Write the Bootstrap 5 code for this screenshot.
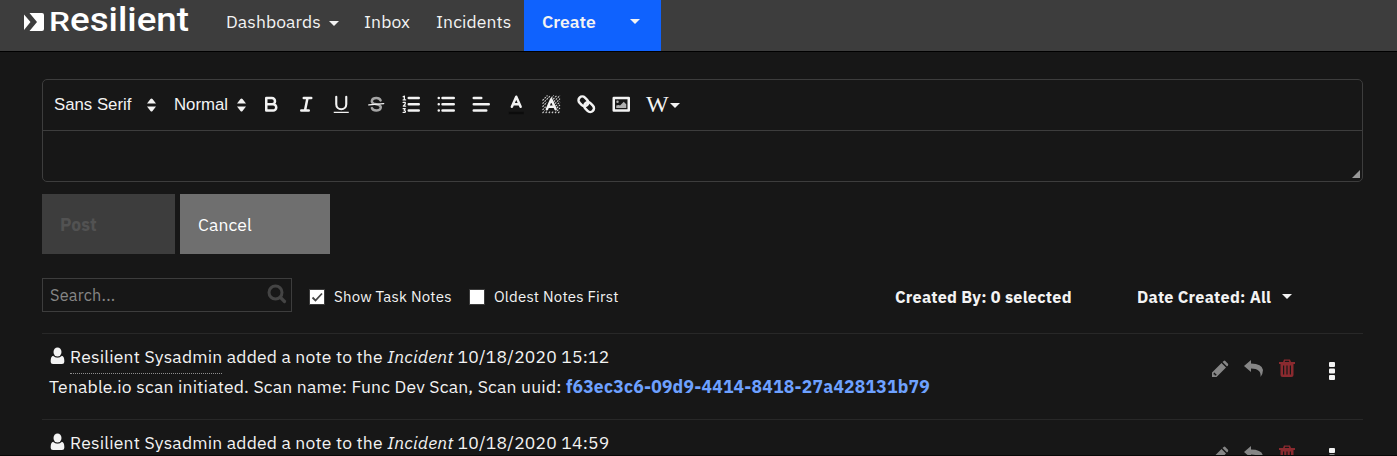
<!DOCTYPE html>
<html lang="en">
<head>
<meta charset="utf-8">
<title>Resilient</title>
<meta name="viewport" content="width=device-width, initial-scale=1">
<link rel="stylesheet" href="https://cdn.jsdelivr.net/npm/bootstrap@5.3.0/dist/css/bootstrap.min.css">
<style>
body{background:#171717;color:#f3f3f3;font-family:"IBM Plex Sans",Roboto,"Noto Sans",sans-serif;font-size:17.5px;line-height:30px}
.page{height:456px;border-bottom:1px solid #080808}
.topbar{height:52px;background:#3d3d3d;border-bottom:1px solid #000}
.topbar a,.topbar button{line-height:43px;height:51px;color:#f3f3f3;text-decoration:none;white-space:nowrap}
.topbar a span,.actions span{letter-spacing:.1px}
.brand{width:226px;padding-left:24px}
.brand svg{display:block}
.caret{display:inline-block;border:5px solid transparent;border-top-color:currentColor;border-bottom:0}
.create{background:#0f62fe;width:137px;padding:0 21px 0 18px;font-weight:600}
.work{padding:27px 34px 0 42px}
.editor{height:103px;border:1px solid #3d3d3d;border-radius:5px}
.tools{height:51px;border-bottom:1px solid #3d3d3d;padding-left:11px}
.pick{font:400 16.8px/30px "Liberation Sans",sans-serif}
.tool{width:35px;height:30px;display:flex;align-items:center;justify-content:center;padding-bottom:1px}
.tool svg{width:22.5px;height:22.5px}
.s{fill:none;stroke:#f3f3f3;stroke-linecap:round;stroke-linejoin:round;stroke-width:2}
.f{fill:#f3f3f3}.th{stroke-width:1}
.wiki{font:24px/26px "Liberation Serif",serif;margin-top:-2px}
.grip{width:8px;height:8px;background:#999;clip-path:polygon(100% 0,100% 100%,0 100%);margin:0 2px 3px 0}
.actions{gap:5px;margin-top:12px}
.actions button{height:60px;border:0;text-align:left;padding:2px 18px 0}
.post{width:133px;background:#3d3d3d;color:#525252;font-weight:700}
.cancel{width:150px;background:#6f6f6f;color:#fff}
.filters{margin-top:24px;height:34px;font-size:15px;letter-spacing:.2px}
.searchbox{width:250px;height:34px;border:1px solid #3d3d3d;padding:0 4px 0 7px;color:#868686;font-size:16.25px}
.box{width:16px;height:16px;background:#fff;border:1px solid #3d3d3d}
.filters b{font-weight:700;font-size:16.25px;letter-spacing:.24px}
.notes{margin-top:21px}
.note{height:86px;border-top:1px solid #282828;padding:8px 22px 0 7px;letter-spacing:.2px}
.who{border-bottom:1px dotted #8d8d8d;display:inline-block;height:32px}
.note .line{height:30px;white-space:nowrap}
.user{width:15px;height:18px;margin:-4px 5px 0 1px;vertical-align:middle}
.uuid{color:#6ea1ff;font-weight:700;letter-spacing:.22px}
</style>
</head>
<body>
<svg class="d-none">
  <symbol id="user" viewBox="0 0 15 18"><ellipse class="f" cx="7.500" cy="5" rx="4" ry="4.500"/><path class="f" d="M3.300 8.700Q7.500 12 11.700 8.700Q14.300 9.500 14.300 13.500V15Q14.300 17 12 17H3Q.7 17 .7 15V13.500Q.7 9.500 3.300 8.700z"/><path d="M3.200 8.600Q7.500 12.300 11.800 8.600" fill="none" stroke="#171717" stroke-width=".6"/></symbol>
  <symbol id="note-tools" viewBox="0 0 130 24"><g fill="#868686"><path fill-rule="evenodd" d="M1 18V13.500L10.500 4L15 8.500L5.500 18zM2.700 14L2.500 15.500H3.700V16.600L5 16.400L5.700 15.700L3.400 13.400z"/><path d="M11.500 3L12.700 1.900Q13.500 1.300 14.300 1.900L17 4.700Q17.500 5.500 17 6.200L16 7.500z"/><path d="M33 7L40 1V4.500Q51 4.500 52 11Q52 14.500 49.500 18Q50.500 9.500 40 9.500V13z"/></g><path fill="#8a2a2f" fill-rule="evenodd" d="M68 3H72L73 0.500H79L80 3H84V5H82.500V16Q82.500 18 80.500 18H71.500Q69.500 18 69.500 16V5H68zM73.700 3H78.300L77.800 1.800H74.200zM72 6.500V15.500H73.200V6.500zM75.400 6.500V15.500H76.600V6.500zM78.800 6.500V15.500H80V6.500z"/><g class="f"><rect x="118" y="3" width="6" height="5" rx="1"/><rect x="118" y="9.500" width="6" height="5" rx="1"/><rect x="118" y="16" width="6" height="5" rx="1"/></g></symbol>
</svg>
<div class="page overflow-hidden">
<nav class="topbar d-flex">
  <a class="brand" href="#"><svg width="170" height="40" viewBox="0 0 170 40">
    <path fill="#fff" d="M0 14.500L6.500 22L0 30zM5.500 13H18Q20 13 20 15V29Q20 31 18 31H5.500L13 22z"/>
    <text y="31" fill="#fff" font-family="Roboto,sans-serif" font-weight="500"><tspan x="25" font-size="25" textLength="21" lengthAdjust="spacingAndGlyphs">R</tspan><tspan x="46" font-size="34" textLength="119" lengthAdjust="spacingAndGlyphs">esilient</tspan></text></svg></a>
  <a href="#" style="width:138px"><span>Dashboards</span><i class="caret ms-2 align-middle"></i></a>
  <a href="#" style="width:72px"><span>Inbox</span></a>
  <a href="#" style="width:88px"><span>Incidents</span></a>
  <button class="create border-0 d-flex justify-content-between"><span>Create</span><i class="caret" style="margin-top:19px"></i></button>
</nav>
<main class="work">
  <section class="editor d-flex flex-column justify-content-between">
    <div class="tools d-flex align-items-center">
      <div class="pick d-flex align-items-center justify-content-between" style="width:102px"><span>Sans Serif</span><svg width="9" height="14"><path class="f" d="M0 5.500L3.500 1Q4.500 0 5.500 1L9 5.500zM0 8.500H9L5.500 13Q4.500 14 3.500 13z"/></svg></div>
      <div class="pick d-flex align-items-center justify-content-between" style="width:72px;margin:0 8px 0 18px"><span>Normal</span><svg width="9" height="14"><path class="f" d="M0 5.500L3.500 1Q4.500 0 5.500 1L9 5.500zM0 8.500H9L5.500 13Q4.500 14 3.500 13z"/></svg></div>
      <span class="tool"><svg viewBox="0 0 18 18"><path class="s" d="M5 4H9.500A2.500 2.500 0 0 1 12 6.500A2.500 2.500 0 0 1 9.500 9H5zM5 9H10.500A2.500 2.500 0 0 1 13 11.500A2.500 2.500 0 0 1 10.500 14H5z"/></svg></span>
      <span class="tool"><svg viewBox="0 0 18 18"><path class="s" d="M7 4H13M5 14H11M8 14L10 4"/></svg></span>
      <span class="tool"><svg viewBox="0 0 18 18"><path class="s" style="stroke-width:1.700" d="M5 3V9A4 4 0 0 0 9 13A4 4 0 0 0 13 9V3"/><rect class="f" x="3" y="15" width="12" height="1"/></svg></span>
      <span class="tool"><svg viewBox="0 0 18 18"><path class="s" style="stroke:#a5a5a5;stroke-width:1.900" d="M12.500 6A3.700 2.700 0 0 0 9 4C5 4 4.500 7.500 7 8.500L11 9.500C14 11 12.500 14 9 14A3.700 2.700 0 0 1 5.500 12"/><path class="s th" d="M3 9.500L15 8.500"/></svg></span>
      <span class="tool"><svg viewBox="0 0 18 18"><path class="s" d="M7 4H15M7 9H15M7 14H15"/><path class="s th" d="M2.500 3L3.500 2.500V5.500M2.500 5.500H4.500M2.500 7.500H4.200V8.700L2.600 10.500H4.500M2.500 12.500H4.200L3.300 13.800Q5 14.500 4 15.500H2.500"/></svg></span>
      <span class="tool"><svg viewBox="0 0 18 18"><path class="s" d="M6 4H15M6 9H15M6 14H15M3 4H3.010M3 9H3.010M3 14H3.010"/></svg></span>
      <span class="tool"><svg viewBox="0 0 18 18"><path class="s" d="M3 4H9M3 9H15M3 14H13"/></svg></span>
      <span class="tool"><svg viewBox="0 0 18 18"><rect x="3" y="15" width="12" height="2" fill="#0c0c0c"/><path class="s" d="M5.500 11L9 3L12.500 11M6.500 9H11.500"/></svg></span>
      <span class="tool"><svg viewBox="0 0 18 18"><path class="s" style="stroke-width:.85;stroke:#d0d0d0;stroke-linecap:butt" stroke-dasharray="1.500 .8" d="M2 6L6 2M2 8.500L8.500 2M2 11L5.500 7.500M2 13.500L4.500 11M2 16L4 14M4.500 16L6 14.500M7 16L8.500 14.500M9.500 16L11 14.500M12 16L16 12M14.500 16L16 14.500M13.500 12L16 9.500M12.500 10.500L16 7M12 8.500L16 4.500M11 7L16 2M10.500 5L13.500 2M9 4L11 2"/><path class="s" d="M5.500 13L9 5L12.500 13M6.500 11H11.500"/></svg></span>
      <span class="tool"><svg viewBox="0 0 18 18"><g transform="rotate(45 9 9)"><rect class="s" x="1.500" y="6" width="8.500" height="6" rx="3"/><rect class="s" x="8" y="6" width="8.500" height="6" rx="3"/></g></svg></span>
      <span class="tool"><svg viewBox="0 0 18 18"><rect class="s" x="3" y="4" width="12" height="10"/><circle cx="6" cy="7" r="1" fill="#b0b0b0"/><path fill="#b0b0b0" d="M5 12V10L7 9.500L8 10L11 7L13 9V12z"/></svg></span>
      <span class="d-flex align-items-center" style="margin-left:7px"><span class="wiki">W</span><i class="caret" style="margin-left:1px"></i></span>
    </div>
    <div class="grip align-self-end"></div>
  </section>
  <div class="actions d-flex"><button class="post"><span>Post</span></button><button class="cancel"><span>Cancel</span></button></div>
  <div class="filters d-flex align-items-center">
    <div class="searchbox d-flex align-items-center justify-content-between"><span>Search...</span><svg width="20" height="20" style="margin-top:-2px"><circle cx="8.500" cy="8.500" r="6.500" fill="none" stroke="#444" stroke-width="3"/><path d="M13.500 13.500L17.500 17.500" stroke="#444" stroke-width="3.200" stroke-linecap="round"/></svg></div>
    <span class="box d-flex" style="margin:4px 9px 0 17px"><svg width="14" height="14"><path d="M2.500 7.500L5.500 10.500L12 3.500" fill="none" stroke="#444" stroke-width="1.800"/></svg></span>
    <span class="text-nowrap" style="width:118px;margin-top:4px">Show Task Notes</span>
    <span class="box" style="margin:4px 9px 0 17px"></span>
    <span style="width:401px;margin-top:4px">Oldest Notes First</span>
    <b style="width:242px;margin-top:4px">Created By: 0 selected</b>
    <b style="width:145px;margin-top:4px">Date Created: All</b><i class="caret" style="margin-top:3px"></i>
  </div>
  <div class="notes">
    <article class="note d-flex justify-content-between">
      <div><div class="line"><svg class="user"><use href="#user"/></svg><span class="who">Resilient Sysadmin</span> added a note to the <em>Incident</em> 10/18/2020 15:12</div>
      <div class="line">Tenable.io scan initiated. Scan name: Func Dev Scan, Scan uuid: <span class="uuid">f63ec3c6-09d9-4414-8418-27a428131b79</span></div></div>
      <div style="padding-top:17px"><svg class="d-block" width="130" height="24"><use href="#note-tools"/></svg></div>
    </article>
    <article class="note d-flex justify-content-between">
      <div><div class="line"><svg class="user"><use href="#user"/></svg><span class="who">Resilient Sysadmin</span> added a note to the <em>Incident</em> 10/18/2020 14:59</div></div>
      <div style="padding-top:17px"><svg class="d-block" width="130" height="24"><use href="#note-tools"/></svg></div>
    </article>
  </div>
</main>
</div>
<script src="https://cdn.jsdelivr.net/npm/bootstrap@5.3.0/dist/js/bootstrap.bundle.min.js"></script>
</body>
</html>
